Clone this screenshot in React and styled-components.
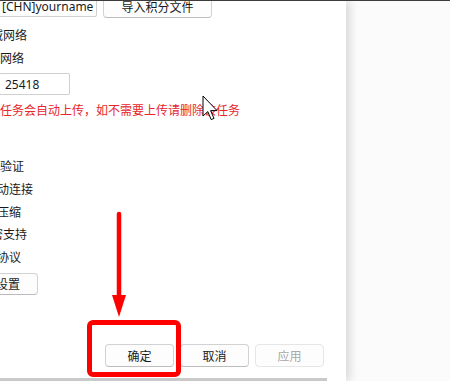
import React from 'react'
import { styled, createGlobalStyle } from 'styled-components'

const GlobalStyle = createGlobalStyle`
  html, body {
    margin: 0;
    padding: 0;
    background: #fbfbfb;
  }
  body {
    font-family: "Noto Sans", "Noto Sans CJK SC", sans-serif;
    font-size: 12px;
    color: #1a1a1a;
  }
`

const Viewport = styled.div`
  position: relative;
  width: 450px;
  height: 381px;
  overflow: hidden;
  box-sizing: border-box;
  border-top: 1px solid #3c3c3c;
  background: #fbfbfb;
`

const Dialog = styled.div`
  position: relative;
  z-index: 1;
  width: 346px;
  height: 100%;
  background: #ffffff;
  box-shadow: 4px 0 9px rgba(0, 0, 0, 0.14);
  display: flex;
  flex-direction: column;
`

const Body = styled.div`
  display: flex;
  flex-direction: column;
  align-items: flex-start;
`

const TopRow = styled.div`
  display: flex;
  align-items: flex-start;
  gap: 6px;
  margin-top: -6px;
`

const Field = styled.input`
  box-sizing: border-box;
  height: 22px;
  width: ${p => p.$width}px;
  margin: ${p => p.$top || 0}px 0 0 ${p => p.$shift || 0}px;
  padding: 0 0 0 ${p => p.$pad || 4}px;
  border: 1px solid #d0d0d0;
  border-radius: 2px;
  background: #fff;
  font-family: "Noto Sans", "Noto Sans CJK SC", sans-serif;
  font-size: 12px;
  color: #1a1a1a;
  outline: none;
`

const Button = styled.button`
  box-sizing: border-box;
  height: ${p => p.$height || 22}px;
  width: ${p => p.$width}px;
  margin: ${p => p.$top || 0}px 0 0 ${p => p.$shift || 0}px;
  padding: 0;
  border: 1px solid ${p => (p.disabled ? '#e6e6e6' : '#d2d2d2')};
  border-bottom-color: ${p => (p.disabled ? '#e6e6e6' : '#bcbcbc')};
  border-radius: 4px;
  background: #fdfdfd;
  font-family: "Noto Sans", "Noto Sans CJK SC", sans-serif;
  font-size: 12px;
  color: ${p => (p.disabled ? '#a8a8a8' : '#1a1a1a')};
  white-space: nowrap;
  overflow: hidden;
`

const Label = styled.div`
  height: ${p => p.$height || 23}px;
  line-height: ${p => p.$height || 23}px;
  margin: ${p => p.$top || 0}px 0 0 ${p => p.$shift || 0}px;
  white-space: nowrap;
`

const Notice = styled(Label)`
  color: #e8262b;
`

const CheckGroup = styled.div`
  display: flex;
  flex-direction: column;
  margin-top: 34px;
`

const Footer = styled.div`
  margin-top: auto;
  display: flex;
  justify-content: flex-end;
  gap: 6px;
  padding: 0 22px 11px 0;
`

const ScrollTrack = styled.div`
  width: 327px;
  height: 3px;
  background: #c9c9c9;
`

const Highlight = styled.div`
  position: absolute;
  z-index: 2;
  left: 87px;
  top: 319px;
  width: 94px;
  height: 57px;
  box-sizing: border-box;
  border: 5px solid #ff0000;
  border-radius: 6px;
`

const Overlay = styled.svg`
  position: absolute;
  z-index: 3;
  left: ${p => p.$left}px;
  top: ${p => p.$top}px;
`

const checks = [
  { text: '证书验证', shift: -24 },
  { text: '自动连接', shift: -15 },
  { text: '启用压缩', shift: -27 },
  { text: '加密支持', shift: -21 },
  { text: '加密协议', shift: -27 },
]

const App = () => {
  return (
    <>
      <GlobalStyle />
      <Viewport>
        <Dialog>
          <Body>
            <TopRow>
              <Field $width={99} $shift={-2} $pad={3} readOnly value="[CHN]yourname" />
              <Button $width={109} $top={1}>导入积分文件</Button>
            </TopRow>
            <Label $top={6} $shift={-21}>局域网络</Label>
            <Label $shift={-24}>使用网络</Label>
            <Field $width={71} $shift={-1} $pad={5} $top={3} readOnly value="25418" />
            <Notice $top={4}>任务会自动上传，如不需要上传请删除该任务</Notice>
            <CheckGroup>
              {checks.map(c => (
                <Label key={c.text} $height={22.75} $shift={c.shift}>{c.text}</Label>
              ))}
            </CheckGroup>
            <Button $width={84} $shift={-46} $top={3}>代理设置</Button>
          </Body>
          <Footer>
            <Button $width={69} $height={23}>确定</Button>
            <Button $width={69} $height={23}>取消</Button>
            <Button $width={69} $height={23} disabled>应用</Button>
          </Footer>
          <ScrollTrack />
        </Dialog>

        <Highlight />

        <Overlay $left={110} $top={209} width="20" height="112" viewBox="0 0 20 112">
          <line x1="9" y1="4" x2="9" y2="88" stroke="#ff0000" strokeWidth="4.5" strokeLinecap="round" />
          <polygon points="2,85 16,85 9,107" fill="#ff0000" />
        </Overlay>

        <Overlay $left={202} $top={94} width="16" height="28" viewBox="0 0 16 28">
          <path
            d="M1 1 L1 21 L5.8 16.6 L9.2 24.6 L12 23.4 L8.6 15.6 L15 15.6 Z"
            fill="#ffffff"
            stroke="#000000"
            strokeWidth="1"
            strokeLinejoin="round"
          />
        </Overlay>
      </Viewport>
    </>
  )
}

export default App
